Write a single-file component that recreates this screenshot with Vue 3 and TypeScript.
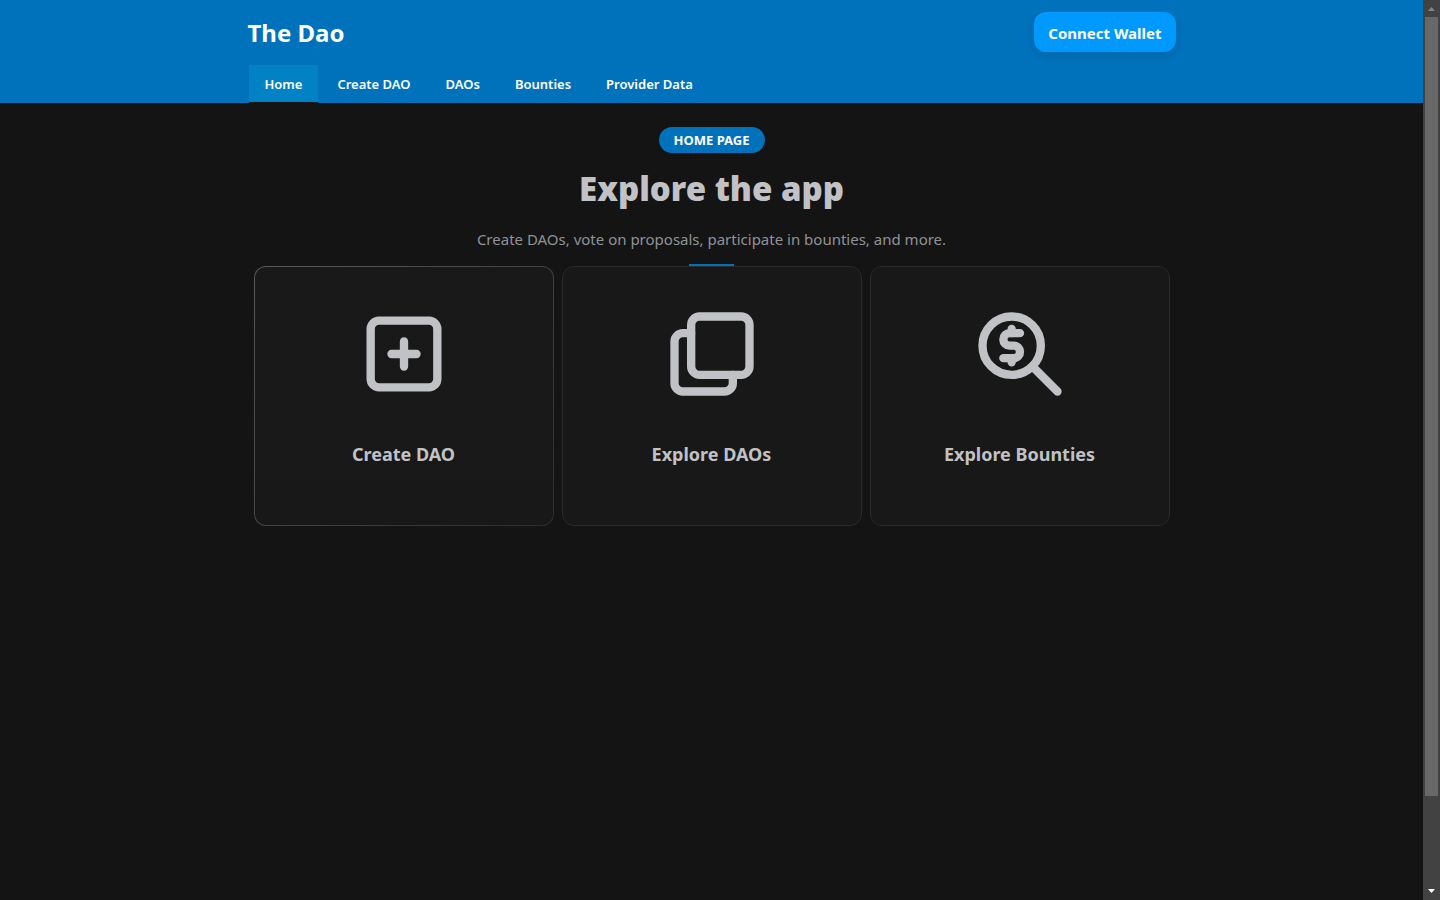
<script setup lang="ts">
import { ref } from 'vue'

interface Card {
  label: string
  paths: string[]
}

const tabs: string[] = ['Home', 'Create DAO', 'DAOs', 'Bounties', 'Provider Data']
const activeTab = ref<string>('Home')

const cards: Card[] = [
  {
    label: 'Create DAO',
    paths: [
      'M6 4h12a2 2 0 0 1 2 2v12a2 2 0 0 1 -2 2h-12a2 2 0 0 1 -2 -2v-12a2 2 0 0 1 2 -2z',
      'M9 12h6',
      'M12 9v6',
    ],
  },
  {
    label: 'Explore DAOs',
    paths: [
      'M9 3h10a2 2 0 0 1 2 2v10a2 2 0 0 1 -2 2h-10a2 2 0 0 1 -2 -2v-10a2 2 0 0 1 2 -2z',
      'M17 17v2a2 2 0 0 1 -2 2h-10a2 2 0 0 1 -2 -2v-10a2 2 0 0 1 2 -2h2',
    ],
  },
  {
    label: 'Explore Bounties',
    paths: [
      'M3 10a7 7 0 1 0 14 0a7 7 0 1 0 -14 0',
      'M21 21l-6 -6',
      'M12 7h-2.5a1.5 1.5 0 0 0 0 3h1a1.5 1.5 0 0 1 0 3h-2.5',
      'M10 13v1m0 -8v1',
    ],
  },
]
</script>

<template>
  <div class="shell">
    <div class="page">
      <header class="header">
        <div class="container">
          <div class="topbar">
            <span class="brand">The Dao</span>
            <button type="button" class="connect">Connect Wallet</button>
          </div>
          <nav class="tabs" aria-label="Main">
            <a
              v-for="tab in tabs"
              :key="tab"
              href="#"
              class="tab"
              :class="{ active: tab === activeTab }"
              @click.prevent="activeTab = tab"
            >{{ tab }}</a>
          </nav>
        </div>
      </header>
      <main class="container main">
        <span class="badge">HOME PAGE</span>
        <h1 class="title">Explore the app</h1>
        <p class="lead">Create DAOs, vote on proposals, participate in bounties, and more.</p>
        <div class="rule"></div>
        <div class="cards">
          <a v-for="card in cards" :key="card.label" href="#" class="card" @click.prevent>
            <svg class="icon" viewBox="0 0 24 24" aria-hidden="true">
              <path v-for="d in card.paths" :key="d" :d="d" />
            </svg>
            <span class="label">{{ card.label }}</span>
          </a>
        </div>
      </main>
    </div>
    <div class="scrollbar" aria-hidden="true">
      <svg class="arrow" viewBox="0 0 17 17"><path d="M5 11l3.500 -4l3.500 4z" fill="#868686" /></svg>
      <div class="track"><div class="thumb"></div></div>
      <svg class="arrow" viewBox="0 0 17 17"><path d="M5 6l3.500 4l3.500 -4z" fill="#ffffff" /></svg>
    </div>
  </div>
</template>

<style>
body {
  margin: 0;
  background: #141414;
}
</style>

<style scoped>
.shell {
  display: flex;
  min-height: 100vh;
  background: #141414;
  color: #c1c2c5;
  font-family: 'Segoe UI', 'Noto Sans', 'Open Sans', sans-serif;
}
.page {
  flex: 1;
  min-width: 0;
}
.container {
  box-sizing: border-box;
  max-width: 960px;
  margin: 0 auto;
  padding: 0 16px;
}
.header {
  background: #0072bc;
}
.topbar {
  display: flex;
  align-items: center;
  justify-content: space-between;
  height: 64px;
}
.brand {
  padding-top: 2px;
  color: #fff;
  font-size: 24px;
  font-weight: 700;
  line-height: 32px;
}
.connect {
  height: 40px;
  padding: 2px 14px 0;
  border: 0;
  border-radius: 12px;
  background: #0099ff;
  box-shadow: 0 4px 12px rgba(0, 0, 0, 0.1);
  color: #fff;
  font-family: inherit;
  font-size: 15px;
  font-weight: 700;
  line-height: 20px;
}
.tabs {
  display: flex;
  gap: 3px;
  padding: 1px 0 0 1px;
}
.tab {
  padding: 0 16px;
  color: #fff;
  font-size: 13px;
  font-weight: 600;
  line-height: 38px;
  text-decoration: none;
}
.tab.active {
  background: #0082c4;
  box-shadow: inset 0 -1px 0 #141414;
}
.main {
  display: flex;
  flex-direction: column;
  align-items: center;
  padding-top: 24px;
}
.badge {
  padding: 0 15px;
  border-radius: 13px;
  background: #0072bc;
  color: #fff;
  font-size: 13px;
  font-weight: 700;
  line-height: 26px;
}
.title {
  margin: 14px 0 0;
  font-size: 33px;
  font-weight: 900;
  line-height: 44px;
}
.lead {
  margin: 16px 0 0;
  color: #909296;
  font-size: 15px;
  line-height: 25px;
}
.rule {
  width: 45px;
  height: 2px;
  margin-top: 12px;
  background: #0072bc;
}
.cards {
  display: grid;
  grid-template-columns: repeat(3, minmax(0, 300px));
  gap: 8px;
  justify-content: center;
  width: 100%;
}
.card {
  display: flex;
  flex-direction: column;
  align-items: center;
  gap: 36px;
  box-sizing: border-box;
  min-height: 260px;
  padding-top: 37px;
  border: 1px solid #2a2a2a;
  border-radius: 12px;
  background: #181818;
  color: #c1c2c5;
  text-decoration: none;
}
.card:first-child {
  border-color: transparent;
  background:
    linear-gradient(#191919, #181818) padding-box,
    linear-gradient(135deg, #5a5a5a, #2c2c2c) border-box;
}
.icon {
  width: 100px;
  height: 100px;
  fill: none;
  stroke: #c1c2c5;
  stroke-width: 2;
  stroke-linecap: round;
  stroke-linejoin: round;
}
.label {
  font-size: 18px;
  font-weight: 700;
  line-height: 28px;
}
.scrollbar {
  position: sticky;
  top: 0;
  display: flex;
  flex-direction: column;
  width: 17px;
  height: 100vh;
  background: #424242;
}
.arrow {
  width: 17px;
  height: 17px;
}
.track {
  flex: 1;
  padding: 0 2px;
}
.thumb {
  height: 90%;
  background: #686868;
}
</style>
